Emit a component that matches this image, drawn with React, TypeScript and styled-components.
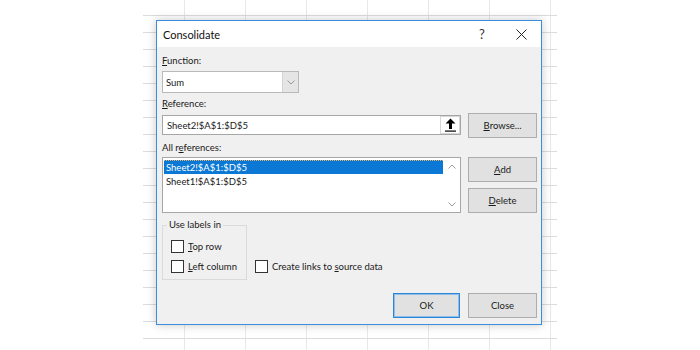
import styled, { createGlobalStyle } from 'styled-components'

const GlobalStyle = createGlobalStyle`
  html, body { margin: 0; padding: 0; background: #fff; }
  * { box-sizing: border-box; }
  body { font-family: Lato, "Open Sans", sans-serif; color: #1a1a1a; }
`

const Page = styled.div`
  width: 700px;
  height: 350px;
  overflow: hidden;
  display: flex;
  justify-content: center;
`

const Sheet = styled.div`
  width: 414px;
  height: 350px;
  padding: 20px 0 0 13px;
  background-image:
    linear-gradient(to bottom, #dcdcdc 1px, transparent 1px),
    linear-gradient(to right, #e8e8e8 1px, transparent 1px);
  background-size: 100% 17px, 61px 100%;
  background-position: 0 15px, 41px 0;
`

const Dialog = styled.div`
  width: 386px;
  height: 305px;
  border: 1px solid #3a8ddc;
  background: #f0f0f0;
  box-shadow: 0 0 9px rgba(0, 0, 0, 0.22);
  display: flex;
  flex-direction: column;
`

const TitleBar = styled.div`
  height: 26px;
  background: #fff;
  display: flex;
  align-items: center;
  padding-left: 6px;
`

const Title = styled.div`
  flex: 1;
  font-size: 11px;
  color: #111;
`

const TitleButton = styled.div<{ $w: number }>`
  width: ${p => p.$w}px;
  height: 26px;
  display: flex;
  align-items: center;
  justify-content: center;
  font-size: 13px;
  color: #333;
`

const Body = styled.div`
  flex: 1;
  display: flex;
  flex-direction: column;
  padding: 7px 4px 6px 5px;
`

const Label = styled.div<{ $mt?: number }>`
  font-size: 9.5px;
  line-height: 14px;
  height: 14px;
  margin-top: ${p => p.$mt ?? 0}px;
  white-space: nowrap;
`

const Key = styled.span`
  text-decoration: underline;
  text-underline-offset: 1px;
`

const Select = styled.div`
  margin-top: 3px;
  width: 137px;
  height: 22px;
  border: 1px solid #b9b9b9;
  background: #fff;
  display: flex;
  align-items: stretch;
`

const SelectValue = styled.div`
  flex: 1;
  font-size: 9.5px;
  padding-left: 3px;
  display: flex;
  align-items: center;
`

const SelectArrow = styled.div`
  width: 16px;
  background: #e5e5e5;
  border-left: 1px solid #d4d4d4;
  display: flex;
  align-items: center;
  justify-content: center;
`

const Row = styled.div<{ $mt: number }>`
  margin-top: ${p => p.$mt}px;
  display: flex;
  gap: 7px;
`

const RefRow = styled(Row)`
  align-items: center;
  height: 24px;
`

const TextBox = styled.div`
  width: 299px;
  height: 20px;
  border: 1px solid #a6a6a6;
  background: #fff;
  display: flex;
  align-items: stretch;
`

const TextValue = styled.div`
  flex: 1;
  font-size: 9.5px;
  padding-left: 4px;
  display: flex;
  align-items: center;
`

const PickButton = styled.div`
  width: 20px;
  border: 1px solid #d6d6d6;
  background: #fff;
  display: flex;
  align-items: center;
  justify-content: center;
`

const Button = styled.div<{ $w?: number; $default?: boolean }>`
  width: ${p => p.$w ?? 69}px;
  height: 25px;
  background: #e1e1e1;
  border: 1px solid ${p => (p.$default ? '#2c86d6' : '#adadad')};
  box-shadow: ${p => (p.$default ? 'inset 0 0 0 1px #8dbfea' : 'none')};
  font-size: 9.5px;
  display: flex;
  align-items: center;
  justify-content: center;
`

const ListBox = styled.div`
  width: 299px;
  height: 56px;
  border: 1px solid #a6a6a6;
  background: #fff;
  display: flex;
`

const ListItems = styled.div`
  flex: 1;
  padding: 2px 0 0 1px;
`

const ListItem = styled.div<{ $selected?: boolean }>`
  height: 14px;
  font-size: 9.5px;
  line-height: 13px;
  padding-left: 2px;
  background: ${p => (p.$selected ? '#0a78d4' : 'transparent')};
  color: ${p => (p.$selected ? '#fff' : '#1a1a1a')};
  border-top: 1px dotted ${p => (p.$selected ? '#e9b66c' : 'transparent')};
`

const ScrollBar = styled.div`
  width: 17px;
  display: flex;
  flex-direction: column;
  justify-content: space-between;
  align-items: center;
  padding: 6px 0 5px;
`

const SideButtons = styled.div`
  display: flex;
  flex-direction: column;
  gap: 6px;
`

const OptionsRow = styled.div`
  margin-top: 5px;
  display: flex;
  gap: 8px;
`

const Group = styled.fieldset`
  margin: 0;
  width: 85px;
  height: 62px;
  padding: 0 0 0 8px;
  border: 1px solid #dadada;
  display: flex;
  flex-direction: column;
  gap: 6px;
`

const Legend = styled.legend`
  font-size: 9.5px;
  line-height: 14px;
  padding: 0 2px;
  margin-left: -4px;
  margin-bottom: 7px;
`

const Check = styled.label<{ $alone?: boolean }>`
  display: flex;
  align-items: center;
  gap: 4px;
  height: 14px;
  font-size: 9.5px;
  white-space: nowrap;
  align-self: ${p => (p.$alone ? 'flex-end' : 'auto')};
  margin-bottom: ${p => (p.$alone ? 7 : 0)}px;
`

const Box = styled.span`
  width: 13px;
  height: 13px;
  border: 1px solid #333;
  background: #fff;
  flex: none;
`

const Footer = styled.div`
  margin-top: auto;
  display: flex;
  justify-content: flex-end;
  gap: 8px;
`

const Chevron = ({ up }: { up?: boolean }) => (
  <svg width="8" height="5" viewBox="0 0 8 5">
    <path
      d={up ? 'M0.5 4.5 L4 1 L7.5 4.5' : 'M0.5 0.5 L4 4 L7.5 0.5'}
      fill="none"
      stroke="#9a9a9a"
      strokeWidth="1"
    />
  </svg>
)

export default function App() {
  return (
    <Page>
      <GlobalStyle />
      <Sheet>
        <Dialog>
          <TitleBar>
            <Title>Consolidate</Title>
            <TitleButton $w={38}>?</TitleButton>
            <TitleButton $w={40}>
              <svg width="11" height="11" viewBox="0 0 11 11">
                <path d="M0.5 0.5 L10.5 10.5 M10.5 0.5 L0.5 10.5" stroke="#222" strokeWidth="1" />
              </svg>
            </TitleButton>
          </TitleBar>
          <Body>
            <Label><Key>F</Key>unction:</Label>
            <Select>
              <SelectValue>Sum</SelectValue>
              <SelectArrow><Chevron /></SelectArrow>
            </Select>

            <Label $mt={4}><Key>R</Key>eference:</Label>
            <RefRow $mt={2}>
              <TextBox>
                <TextValue>Sheet2!$A$1:$D$5</TextValue>
                <PickButton>
                  <svg width="11" height="14" viewBox="0 0 11 14">
                    <path d="M5.5 0.5 L10.5 5.5 L7 5.5 L7 11 L4 11 L4 5.5 L0.5 5.5 Z" fill="#000" />
                    <rect x="0" y="12.5" width="11" height="1.2" fill="#000" />
                  </svg>
                </PickButton>
              </TextBox>
              <Button><Key>B</Key>rowse...</Button>
            </RefRow>

            <Label $mt={4}>All r<Key>e</Key>ferences:</Label>
            <Row $mt={2}>
              <ListBox>
                <ListItems>
                  <ListItem $selected>Sheet2!$A$1:$D$5</ListItem>
                  <ListItem>Sheet1!$A$1:$D$5</ListItem>
                </ListItems>
                <ScrollBar>
                  <Chevron up />
                  <Chevron />
                </ScrollBar>
              </ListBox>
              <SideButtons>
                <Button><Key>A</Key>dd</Button>
                <Button><Key>D</Key>elete</Button>
              </SideButtons>
            </Row>

            <OptionsRow>
              <Group>
                <Legend>Use labels in</Legend>
                <Check><Box /><span><Key>T</Key>op row</span></Check>
                <Check><Box /><span><Key>L</Key>eft column</span></Check>
              </Group>
              <Check $alone><Box /><span>Create links to <Key>s</Key>ource data</span></Check>
            </OptionsRow>

            <Footer>
              <Button $w={67} $default>OK</Button>
              <Button>Close</Button>
            </Footer>
          </Body>
        </Dialog>
      </Sheet>
    </Page>
  )
}
